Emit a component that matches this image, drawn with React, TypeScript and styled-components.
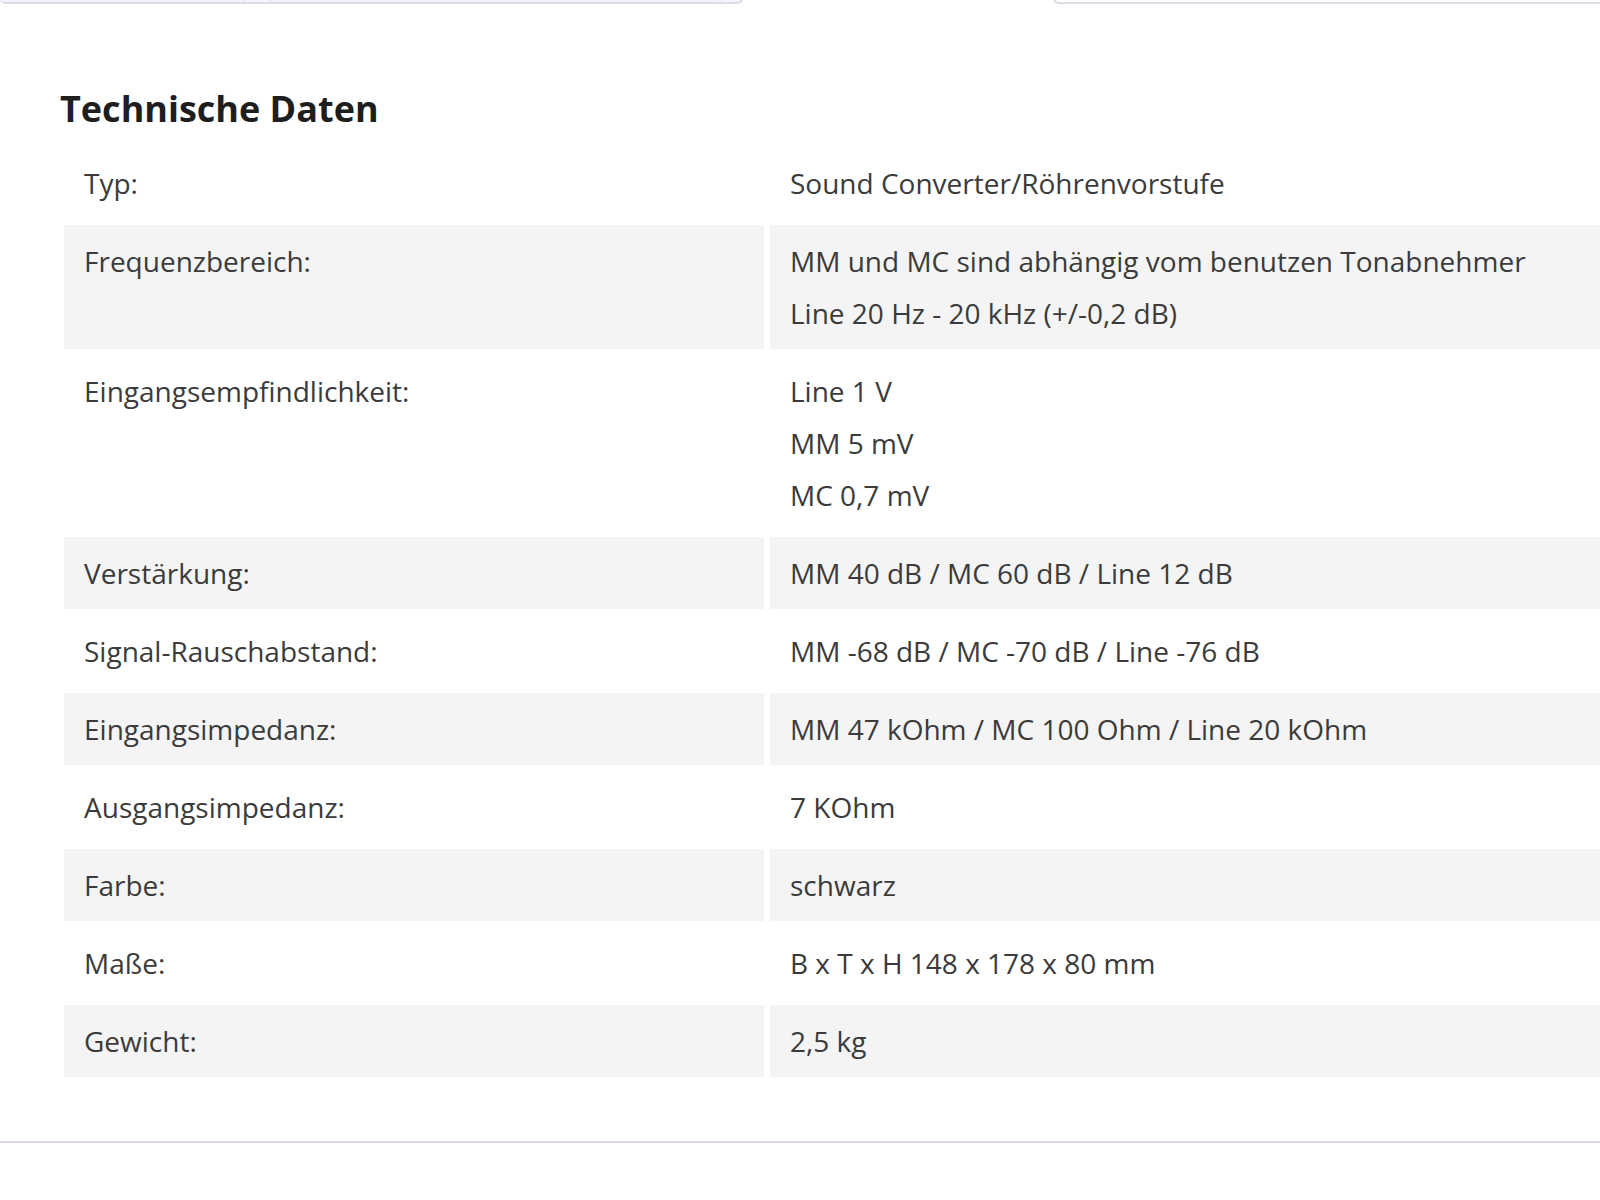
import React from 'react';
import styled, { createGlobalStyle } from 'styled-components';

interface Spec {
  label: string;
  values: string[];
}

const specs: Spec[] = [
  { label: 'Typ:', values: ['Sound Converter/Röhrenvorstufe'] },
  {
    label: 'Frequenzbereich:',
    values: ['MM und MC sind abhängig vom benutzen Tonabnehmer', 'Line 20 Hz - 20 kHz (+/-0,2 dB)'],
  },
  { label: 'Eingangsempfindlichkeit:', values: ['Line 1 V', 'MM 5 mV', 'MC 0,7 mV'] },
  { label: 'Verstärkung:', values: ['MM 40 dB / MC 60 dB / Line 12 dB'] },
  { label: 'Signal-Rauschabstand:', values: ['MM -68 dB / MC -70 dB / Line -76 dB'] },
  { label: 'Eingangsimpedanz:', values: ['MM 47 kOhm / MC 100 Ohm / Line 20 kOhm'] },
  { label: 'Ausgangsimpedanz:', values: ['7 KOhm'] },
  { label: 'Farbe:', values: ['schwarz'] },
  { label: 'Maße:', values: ['B x T x H 148 x 178 x 80 mm'] },
  { label: 'Gewicht:', values: ['2,5 kg'] },
];

const App: React.FC = () => {
  return (
    <Page>
      <GlobalStyle />
      <TopStrip>
        <InputGroup>
          <Field width={248} />
          <Field width={455} />
        </InputGroup>
        <Spacer />
        <SelectBox />
      </TopStrip>
      <Section>
        <Heading>Technische Daten</Heading>
        <SpecTable>
          <tbody>
            {specs.map((spec, i) => (
              <SpecRow key={spec.label} shaded={i % 2 === 1}>
                <LabelCell>{spec.label}</LabelCell>
                <ValueCell>
                  {spec.values.map((v) => (
                    <ValueLine key={v}>{v}</ValueLine>
                  ))}
                </ValueCell>
              </SpecRow>
            ))}
          </tbody>
        </SpecTable>
      </Section>
      <Divider />
    </Page>
  );
};

const GlobalStyle = createGlobalStyle`
  html, body {
    margin: 0;
    padding: 0;
    background: #ffffff;
    overflow-x: hidden;
  }
  body {
    font-family: "Open Sans", "Liberation Sans", sans-serif;
  }
`;

const Page = styled.div`
  width: 1600px;
  min-height: 1200px;
  overflow: hidden;
`;

const TopStrip = styled.div`
  display: flex;
  align-items: flex-end;
  height: 4px;
  overflow: hidden;
`;

const InputGroup = styled.div`
  display: flex;
  gap: 20px;
  align-items: flex-end;
  width: 743px;
  height: 40px;
  box-sizing: border-box;
  border: 2px solid #dcdbe6;
  border-left: none;
  border-radius: 0 0 6px 6px;
  background: #f6f6fa;
  flex-shrink: 0;
`;

const Field = styled.div<{ width: number }>`
  width: ${(p) => p.width}px;
  height: 40px;
  box-sizing: border-box;
  border-right: 2px solid #dcdbe6;
  border-left: 2px solid #dcdbe6;
  border-radius: 0 0 6px 6px;
  background: #f3f2f8;
  flex-shrink: 0;
  &:first-child {
    border-left: none;
  }
`;

const Spacer = styled.div`
  width: 310px;
  flex-shrink: 0;
`;

const SelectBox = styled.div`
  flex: 1;
  height: 40px;
  box-sizing: border-box;
  border: 2px solid #dcdbe6;
  border-right: none;
  border-radius: 0 0 0 6px;
  background: #ffffff;
`;

const Section = styled.div`
  padding: 82px 0 0 60px;
`;

const Heading = styled.h2`
  margin: 0 0 9px;
  font-size: 36px;
  line-height: 46px;
  font-weight: 700;
  color: #1e1e1e;
`;

const SpecTable = styled.table`
  margin-left: -2px;
  border-collapse: separate;
  border-spacing: 6px;
  width: 1700px;
  table-layout: fixed;
`;

const SpecRow = styled.tr<{ shaded: boolean }>`
  td {
    background: ${(p) => (p.shaded ? '#f4f4f4' : 'transparent')};
  }
`;

const LabelCell = styled.td`
  width: 660px;
  padding: 10px 20px;
  vertical-align: top;
  font-size: 28px;
  line-height: 52px;
  color: #3b3b3b;
`;

const ValueCell = styled.td`
  padding: 10px 20px;
  vertical-align: top;
  font-size: 28px;
  line-height: 52px;
  color: #3b3b3b;
`;

const ValueLine = styled.div`
  white-space: nowrap;
`;

const Divider = styled.div`
  margin-top: 58px;
  height: 2px;
  background: #dcdbe6;
`;

export default App;
